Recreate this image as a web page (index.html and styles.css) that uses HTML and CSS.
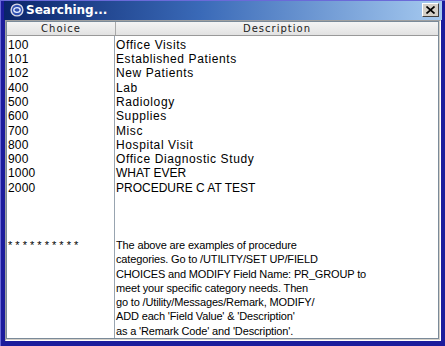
FILE: index.html
```html
<!DOCTYPE html>
<html>
<head>
<meta charset="utf-8">
<link rel="stylesheet" href="styles.css">
</head>
<body>
<div class="window">
  <div class="titlebar">
    <span class="ticon"><svg width="14" height="14" viewBox="0 0 14 14"><circle cx="7" cy="7" r="6.6" fill="#d8d8e4"/><circle cx="7" cy="7" r="5.2" fill="#3050b0"/><ellipse cx="7" cy="7" rx="3.2" ry="2.3" fill="none" stroke="#e8f0ff" stroke-width="1.3"/></svg></span>
    <span class="ttext">Searching...</span>
    <span class="close"><svg width="9" height="8" viewBox="0 0 9 8"><path d="M0.5 0.5 L8.5 7.5 M8.5 0.5 L0.5 7.5" stroke="#000" stroke-width="1.7"/></svg></span>
  </div>
  <div class="body">
    <div class="table">
      <div class="head">
        <div class="hc c1">Choice</div>
        <div class="hc c2">Description</div>
      </div>
      <div class="rows">
        <div class="col c1">
          <div>100</div><div>101</div><div>102</div><div>400</div><div>500</div><div>600</div><div>700</div><div>800</div><div>900</div><div>1000</div><div>2000</div>
          <div>&nbsp;</div><div>&nbsp;</div><div>&nbsp;</div>
          <div class="stars">* * * * * * * * * *</div>
        </div>
        <div class="col c2">
          <div>Office Visits</div><div>Established Patients</div><div>New Patients</div><div>Lab</div><div>Radiology</div><div>Supplies</div><div>Misc</div><div>Hospital Visit</div><div>Office Diagnostic Study</div><div class="caps">WHAT EVER</div><div class="caps">PROCEDURE C AT TEST</div>
          <div>&nbsp;</div><div>&nbsp;</div><div>&nbsp;</div>
          <div class="para">The above are examples of procedure</div>
          <div class="para">categories. Go to /UTILITY/SET UP/FIELD</div>
          <div class="para">CHOICES and MODIFY Field Name: PR_GROUP to</div>
          <div class="para">meet your specific category needs. Then</div>
          <div class="para">go to /Utility/Messages/Remark, MODIFY/</div>
          <div class="para">ADD each 'Field Value' &amp; 'Description'</div>
          <div class="para">as a 'Remark Code' and 'Description'.</div>
        </div>
      </div>
    </div>
  </div>
</div>
</body>
</html>
```
FILE: styles.css
```css
html, body { margin: 0; padding: 0; }
body { width: 445px; height: 346px; overflow: hidden; background: #1c1c9c; font-family: "Liberation Sans", Arial, sans-serif; }
.window {
  width: 445px; height: 346px; box-sizing: border-box;
  background: #1c1c9c;
  border-left: 1px solid #6a6ad8; border-top: 1px solid #6a6ad8;
  padding: 0 4px 5px 4px;
  display: flex; flex-direction: column;
}
.titlebar {
  height: 21px; box-sizing: border-box;
  margin: 0 -1px;
  background: linear-gradient(to right, #0a246a 0%, #3a6ab8 45%, #a6caf0 100%);
  display: flex; align-items: center; padding: 0 3px 0 6px;
}
.ticon { width: 14px; height: 14px; display: flex; margin-right: 2px; }
.ttext { color: #fff; font-weight: bold; font-size: 12px; font-family: "DejaVu Sans", "Liberation Sans", sans-serif; flex: 1; }
.close {
  width: 17px; height: 14px; box-sizing: border-box; background: #d4d0c8;
  border: 1px solid; border-color: #fff #404040 #404040 #fff;
  display: flex; align-items: center; justify-content: center;
}
.body {
  flex: 1; background: #d4d0c8; padding: 0 1px 1px 0;
  border: 1px solid; border-color: #a0a0a0 #fff #fff #a0a0a0;
  display: flex;
}
.table { flex: 1; background: #fff; border: 1px solid #7a8a99; display: flex; flex-direction: column; }
.head { display: flex; height: 13px; background: linear-gradient(#f4f4f4, #e2e2e2); border-bottom: 1px solid #999; }
.hc { font-size: 10px; line-height: 13px; text-align: center; color: #222; letter-spacing: 1px; font-family: "DejaVu Sans", sans-serif; }
.head .c1 { width: 108px; border-right: 1px solid #aaa; }
.head .c2 { flex: 1; }
.rows { flex: 1; display: flex; }
.col { font-size: 12px; line-height: 14.3px; color: #000; padding-top: 2px; letter-spacing: 0.6px; }
.rows .c1 { width: 108px; border-right: 1px solid #98a4b0; padding-left: 1px; box-sizing: border-box; letter-spacing: 0.2px; }
.rows .c2 { flex: 1; padding-left: 1px; }
.caps { letter-spacing: 0; }
.stars { letter-spacing: 0; font-size: 11px; }
.para { font-size: 11px; letter-spacing: -0.15px; }
```
